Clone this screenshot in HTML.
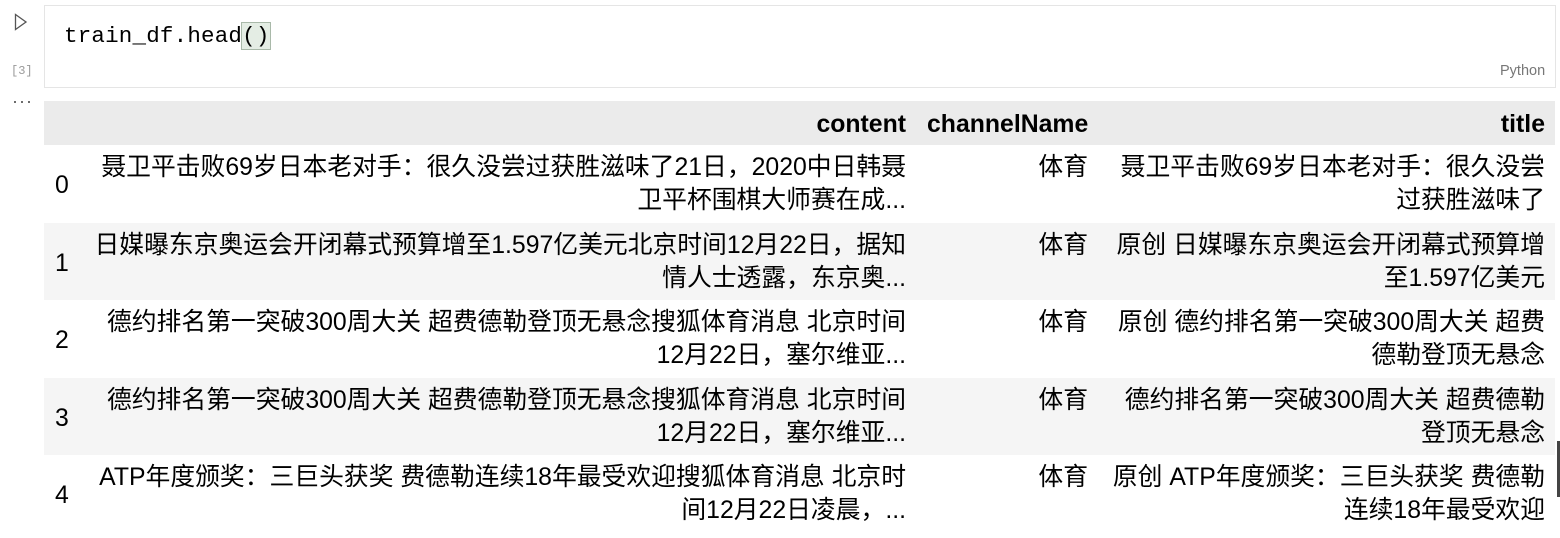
<!DOCTYPE html>
<html><head><meta charset="utf-8"><style>
body{margin:0;width:1560px;height:538px;background:#fff;position:relative;overflow:hidden;font-family:"Liberation Sans","Noto Sans CJK SC",sans-serif;color:#000}
.abs{position:absolute}
.cell{left:44px;top:5px;width:1510px;height:81px;border:1px solid #e5e5e5}
.code{left:64px;top:23px;font-family:"Liberation Mono",monospace;font-size:22.5px;color:#000;letter-spacing:0.2px}
.paren{background:#e4ede4;outline:1px solid #a9b9a9}
.row{position:absolute;left:44px;width:1511px;font-size:24.8px;line-height:33px}
.c{position:absolute;text-align:right;white-space:nowrap}
</style></head><body>
<svg class="abs" style="left:14px;top:13px" width="14" height="18"><path d="M1.5 1.5 L12 9 L1.5 16.5 Z" fill="none" stroke="#555" stroke-width="1.3"/></svg>
<div class="abs" style="left:11px;top:64px;font-size:12px;color:#999;font-family:'Liberation Mono',monospace">[3]</div>
<div class="abs" style="left:12px;top:92px;font-size:18px;color:#555;letter-spacing:1px;line-height:18px">···</div>
<div class="abs cell"></div>
<div class="abs code">train_df.head<span class="paren">()</span></div>
<div class="abs" style="left:1500px;top:63px;font-size:14.5px;color:#777">Python</div>

<div class="row" style="top:101px;height:44px;background:#ebebeb;font-weight:bold">
<div class="c" style="right:649px;top:7px">content</div>
<div class="c" style="left:883px;top:7px">channelName</div>
<div class="c" style="right:10px;top:7px">title</div>
</div>

<div class="row" style="top:145px;height:78px;background:#fff">
<div class="c" style="left:11px;top:24px">0</div>
<div class="c" style="right:649px;top:6px">聂卫平击败69岁日本老对手：很久没尝过获胜滋味了21日，2020中日韩聂<br>卫平杯围棋大师赛在成...</div>
<div class="c" style="right:467px;top:6px">体育</div>
<div class="c" style="right:10px;top:6px">聂卫平击败69岁日本老对手：很久没尝<br>过获胜滋味了</div>
</div>
<div class="row" style="top:223px;height:77px;background:#f5f5f5">
<div class="c" style="left:11px;top:24px">1</div>
<div class="c" style="right:649px;top:6px">日媒曝东京奥运会开闭幕式预算增至1.597亿美元北京时间12月22日，据知<br>情人士透露，东京奥...</div>
<div class="c" style="right:467px;top:6px">体育</div>
<div class="c" style="right:10px;top:6px">原创 日媒曝东京奥运会开闭幕式预算增<br>至1.597亿美元</div>
</div>
<div class="row" style="top:300px;height:78px;background:#fff">
<div class="c" style="left:11px;top:24px">2</div>
<div class="c" style="right:649px;top:6px">德约排名第一突破300周大关 超费德勒登顶无悬念搜狐体育消息 北京时间<br>12月22日，塞尔维亚...</div>
<div class="c" style="right:467px;top:6px">体育</div>
<div class="c" style="right:10px;top:6px">原创 德约排名第一突破300周大关 超费<br>德勒登顶无悬念</div>
</div>
<div class="row" style="top:378px;height:77px;background:#f5f5f5">
<div class="c" style="left:11px;top:24px">3</div>
<div class="c" style="right:649px;top:6px">德约排名第一突破300周大关 超费德勒登顶无悬念搜狐体育消息 北京时间<br>12月22日，塞尔维亚...</div>
<div class="c" style="right:467px;top:6px">体育</div>
<div class="c" style="right:10px;top:6px">德约排名第一突破300周大关 超费德勒<br>登顶无悬念</div>
</div>
<div class="row" style="top:455px;height:78px;background:#fff">
<div class="c" style="left:11px;top:24px">4</div>
<div class="c" style="right:649px;top:6px">ATP年度颁奖：三巨头获奖 费德勒连续18年最受欢迎搜狐体育消息 北京时<br>间12月22日凌晨，...</div>
<div class="c" style="right:467px;top:6px">体育</div>
<div class="c" style="right:10px;top:6px">原创 ATP年度颁奖：三巨头获奖 费德勒<br>连续18年最受欢迎</div>
</div>
<div class="abs" style="left:1557px;top:441px;width:3px;height:56px;background:#444"></div>
</body></html>
